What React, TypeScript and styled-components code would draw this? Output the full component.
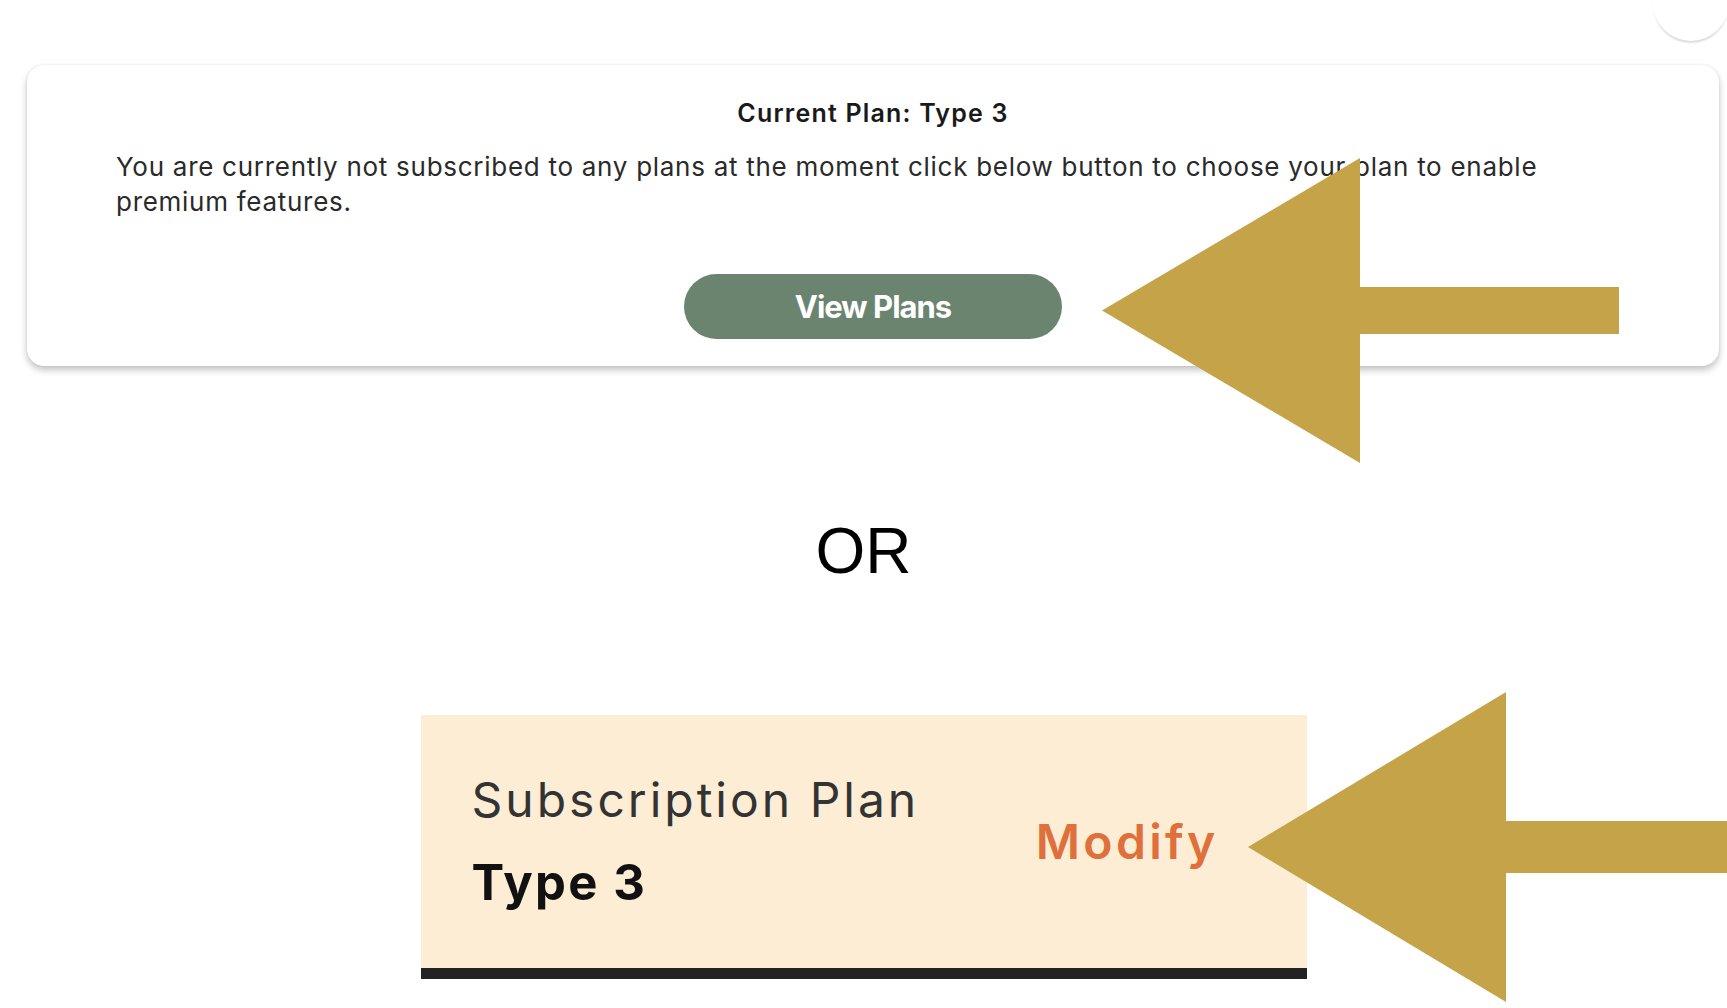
import React from 'react'
import styled, { createGlobalStyle } from 'styled-components'

const GlobalStyle = createGlobalStyle`
  html, body {
    margin: 0;
    padding: 0;
    background: #ffffff;
  }
  body {
    font-family: Inter, "Noto Sans", sans-serif;
    color: #222;
    overflow: hidden;
  }
  * {
    box-sizing: border-box;
  }
`

const Page = styled.div`
  position: relative;
  width: 1727px;
  height: 1008px;
  overflow: hidden;
  display: flex;
  flex-direction: column;
`

const TopBar = styled.header`
  height: 65px;
  flex: none;
  display: flex;
  justify-content: flex-end;
  align-items: flex-start;
`

const Avatar = styled.div`
  width: 76px;
  height: 76px;
  margin-top: -35px;
  margin-right: -2px;
  border-radius: 50%;
  background: #fff;
  box-shadow: 0 3px 2px -1px rgba(0, 0, 0, 0.14);
`

const PlanCard = styled.section`
  margin: 0 8px 0 27px;
  padding: 33px 89px 27px;
  background: #fff;
  border-radius: 17px;
  box-shadow: 0 4px 7px rgba(0, 0, 0, 0.24), 0 0 2px rgba(0, 0, 0, 0.1);
  display: flex;
  flex-direction: column;
  align-items: center;
`

const CardTitle = styled.h5`
  margin: 0;
  font-size: 25px;
  line-height: 30px;
  font-weight: 600;
  letter-spacing: 1.2px;
  color: #1a1a1a;
`

const CardText = styled.p`
  align-self: stretch;
  margin: 21px 0 0;
  padding-right: 40px;
  font-size: 26px;
  line-height: 35px;
  font-weight: 400;
  letter-spacing: 0.72px;
  color: #2a2a2a;
`

const PillButton = styled.button`
  margin-top: 55px;
  width: 378px;
  height: 65px;
  border: none;
  border-radius: 33px;
  background: #6a8470;
  color: #fff;
  font-family: Inter, "Noto Sans", sans-serif;
  font-size: 31px;
  font-weight: 700;
  letter-spacing: -1px;
  cursor: pointer;
`

const OrText = styled.div`
  margin-top: 153px;
  font-family: "Liberation Sans", Arial, sans-serif;
  font-size: 64px;
  line-height: 64px;
  text-align: center;
  color: #000;
`

const SubscriptionBox = styled.div`
  margin: 132px auto 0;
  width: 886px;
  height: 264px;
  padding: 0 88px 0 51px;
  background: #fdedd5;
  border-bottom: 11px solid #232323;
  display: flex;
  align-items: center;
  justify-content: space-between;
`

const PlanInfo = styled.div`
  display: flex;
  flex-direction: column;
`

const PlanLabel = styled.div<{ $strong?: boolean }>`
  font-size: ${(p) => (p.$strong ? '49px' : '48px')};
  line-height: 56px;
  font-weight: ${(p) => (p.$strong ? 700 : 400)};
  letter-spacing: ${(p) => (p.$strong ? '2.2px' : '3px')};
  color: ${(p) => (p.$strong ? '#111' : '#333')};
  margin-top: ${(p) => (p.$strong ? '27px' : '0')};
`

const ModifyLink = styled.a`
  font-size: 48px;
  line-height: 56px;
  font-weight: 600;
  letter-spacing: 3.3px;
  color: #e0703b;
  text-decoration: none;
  cursor: pointer;
`

const ArrowSvg = styled.svg<{ $x: number; $y: number }>`
  position: absolute;
  left: ${(p) => p.$x}px;
  top: ${(p) => p.$y}px;
  pointer-events: none;
`

interface ArrowProps {
  x: number
  y: number
  length: number
  headLength: number
  headHeight: number
  shaftTop: number
  shaftBottom: number
}

const Arrow: React.FC<ArrowProps> = ({ x, y, length, headLength, headHeight, shaftTop, shaftBottom }) => {
  const points = [
    [0, headHeight / 2],
    [headLength, 0],
    [headLength, shaftTop],
    [length, shaftTop],
    [length, shaftBottom],
    [headLength, shaftBottom],
    [headLength, headHeight],
  ]
    .map((pt) => pt.join(','))
    .join(' ')
  return (
    <ArrowSvg $x={x} $y={y} width={length} height={headHeight} viewBox={`0 0 ${length} ${headHeight}`}>
      <polygon points={points} fill="#c5a449" />
    </ArrowSvg>
  )
}

const App: React.FC = () => {
  return (
    <>
      <GlobalStyle />
      <Page>
        <TopBar>
          <Avatar />
        </TopBar>

        <PlanCard>
          <CardTitle>Current Plan: Type 3</CardTitle>
          <CardText>
            You are currently not subscribed to any plans at the moment click below button to choose your plan to
            enable premium features.
          </CardText>
          <PillButton>View Plans</PillButton>
        </PlanCard>

        <OrText>OR</OrText>

        <SubscriptionBox>
          <PlanInfo>
            <PlanLabel>Subscription Plan</PlanLabel>
            <PlanLabel $strong>Type 3</PlanLabel>
          </PlanInfo>
          <ModifyLink>Modify</ModifyLink>
        </SubscriptionBox>

        <Arrow x={1102} y={158} length={517} headLength={258} headHeight={305} shaftTop={129} shaftBottom={176} />
        <Arrow x={1248} y={692} length={479} headLength={258} headHeight={310} shaftTop={129} shaftBottom={181} />
      </Page>
    </>
  )
}

export default App
